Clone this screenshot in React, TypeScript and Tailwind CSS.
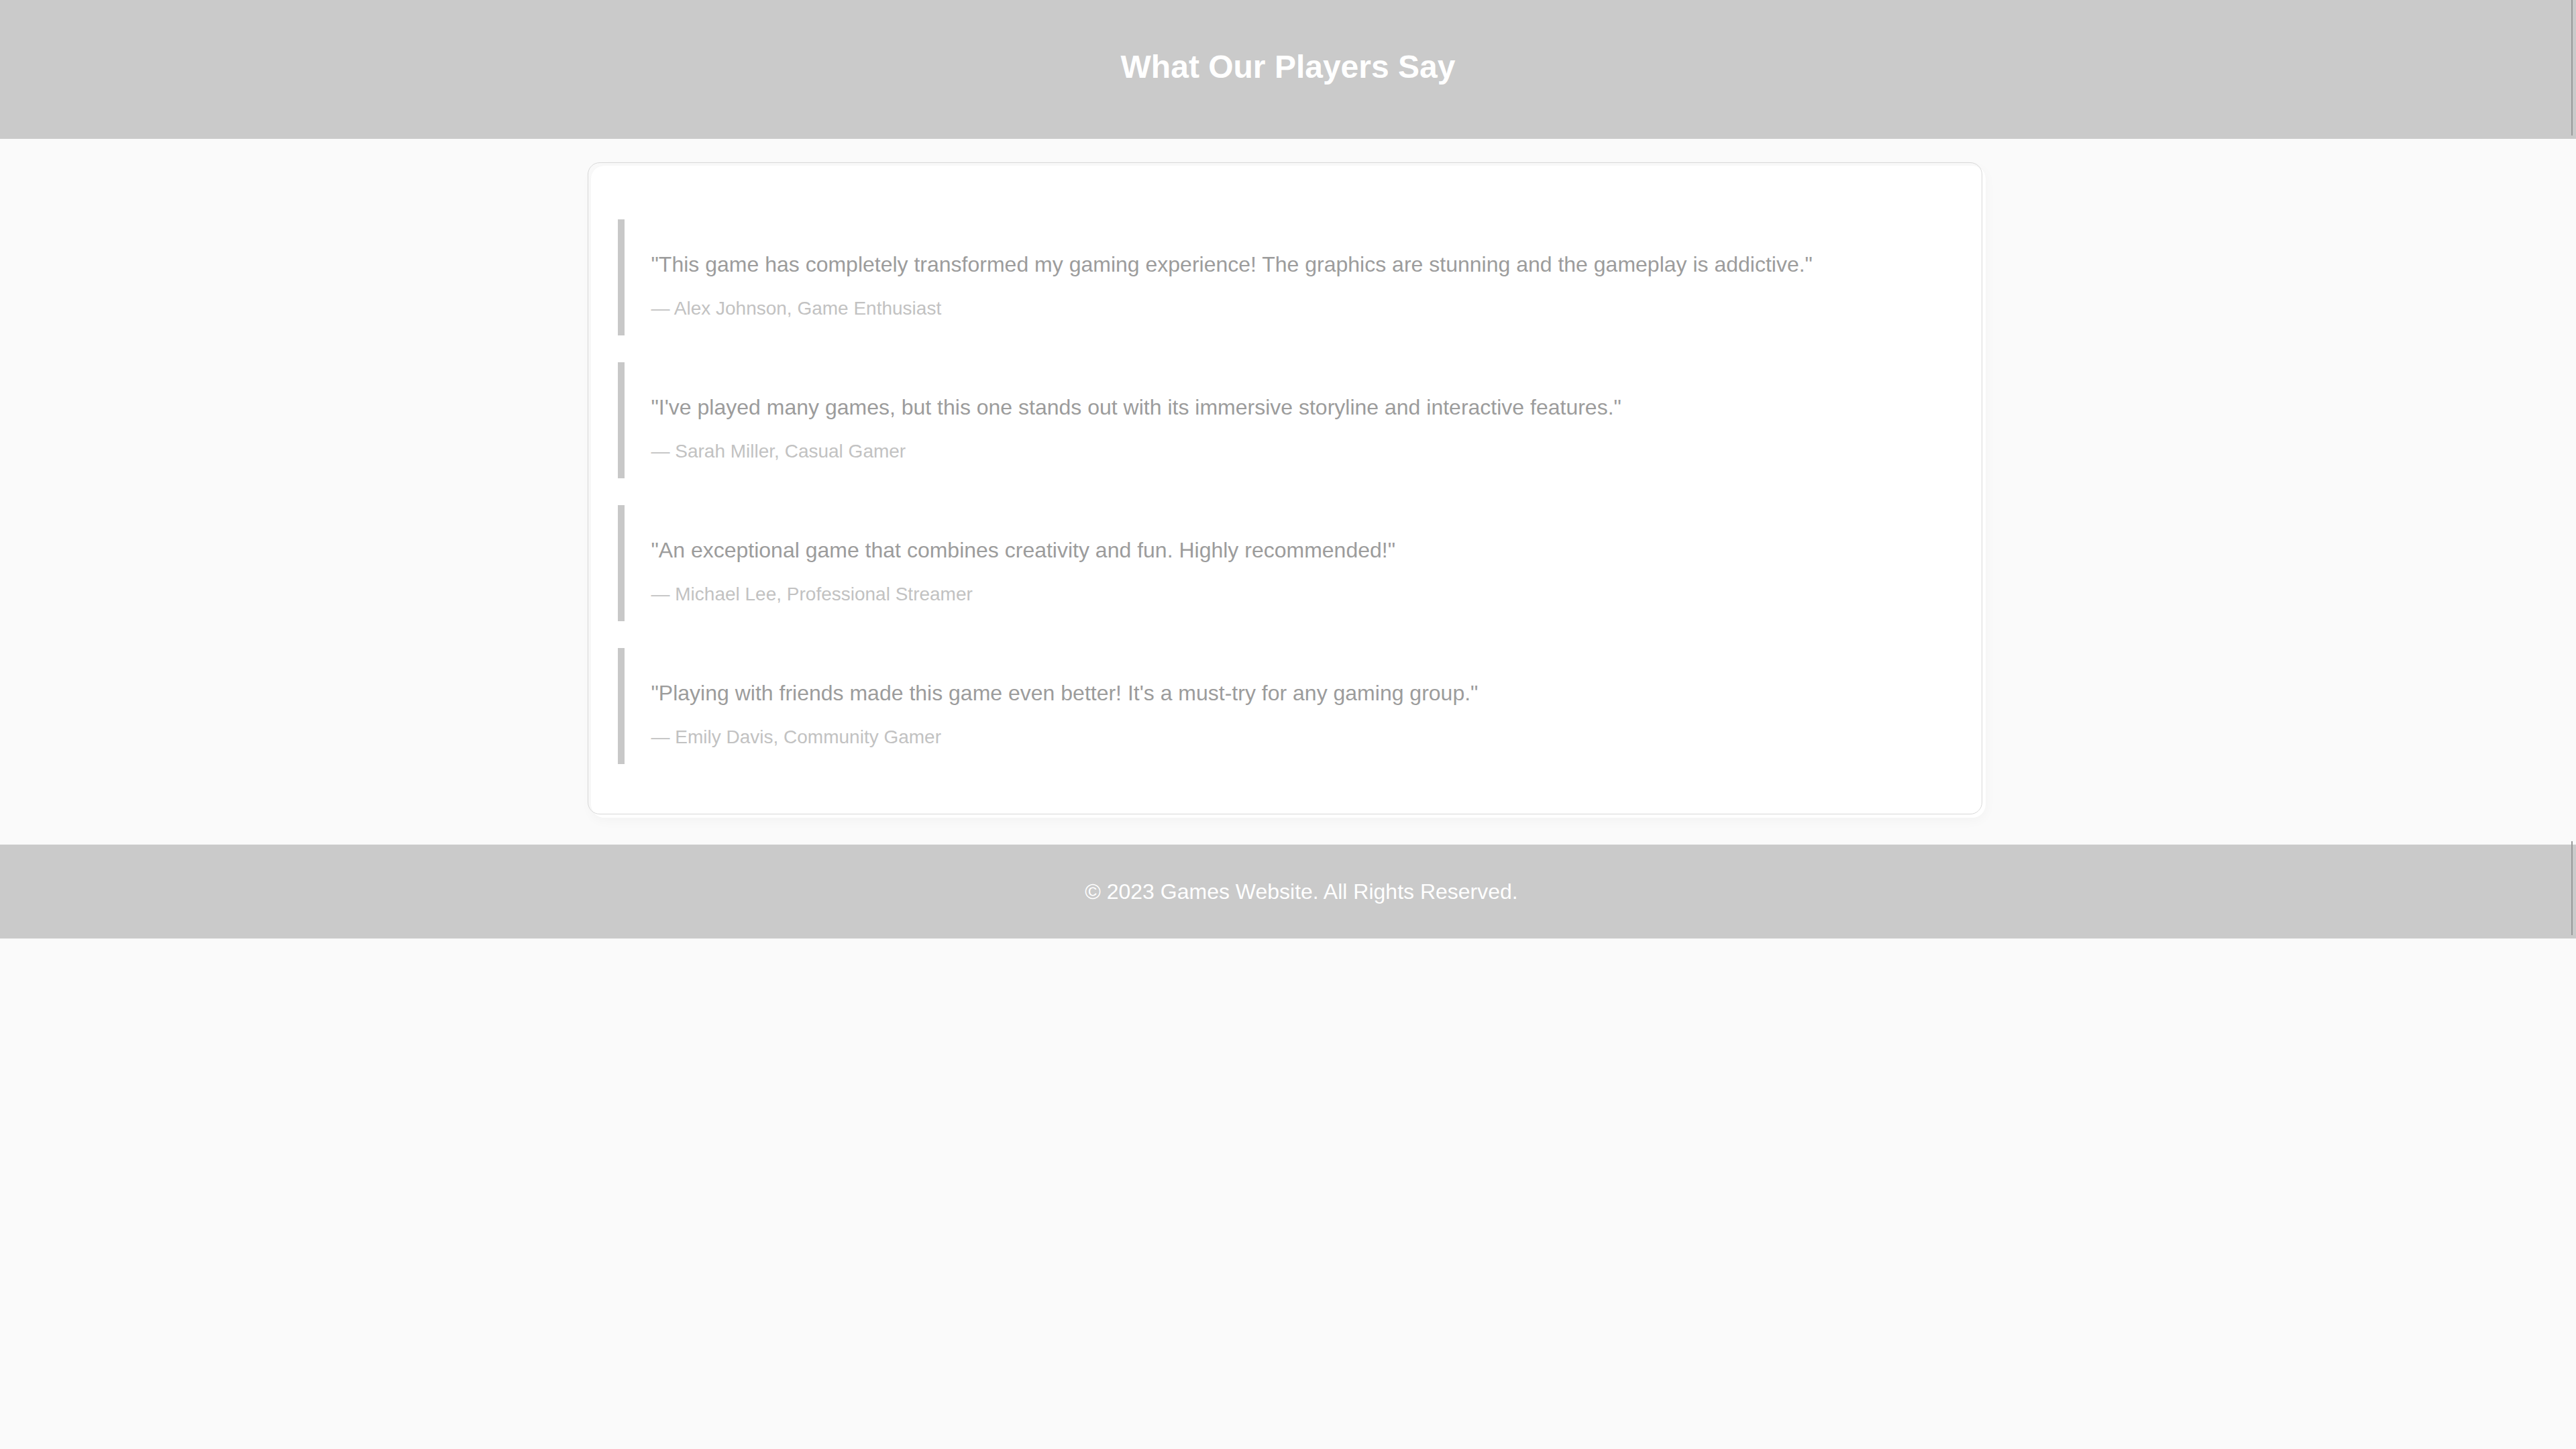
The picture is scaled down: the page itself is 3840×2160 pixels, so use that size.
import React from "react";

type Testimonial = {
    quote: string;
    author: string;
};

const testimonials: Testimonial[] = [
    {
        quote: "\"This game has completely transformed my gaming experience! The graphics are stunning and the gameplay is addictive.\"",
        author: "— Alex Johnson, Game Enthusiast",
    },
    {
        quote: "\"I've played many games, but this one stands out with its immersive storyline and interactive features.\"",
        author: "— Sarah Miller, Casual Gamer",
    },
    {
        quote: "\"An exceptional game that combines creativity and fun. Highly recommended!\"",
        author: "— Michael Lee, Professional Streamer",
    },
    {
        quote: "\"Playing with friends made this game even better! It's a must-try for any gaming group.\"",
        author: "— Emily Davis, Community Gamer",
    },
];

const TestimonialItem: React.FC<Testimonial> = ({ quote, author }) => {
    return (
        <blockquote className="border-l-[10px] border-[#c8c8c8] pl-[40px] pt-[49px] pb-[24px]">
            <p className="text-[32px] leading-[1.15] text-[#9c9c9c]">{quote}</p>
            <p className="mt-[31px] text-[28px] leading-[1.15] text-[#c2c2c2]">{author}</p>
        </blockquote>
    );
};

export default function App() {
    return (
        <div className="min-h-screen bg-[#fafafa] font-['Liberation_Sans',Arial,sans-serif]">
            <header className="relative bg-[#cacaca] pt-[72px] pb-[80px] text-center">
                <h1 className="text-[48px] font-bold leading-[1.15] text-white">
                    What Our Players Say
                </h1>
                <span className="absolute right-[5px] top-0 h-[202px] w-[2px] bg-[#9a9a9a]" />
            </header>

            <main className="py-[40px]">
                <div className="relative mx-auto w-[2079px] rounded-[20px] bg-white p-[40px] shadow-[0_4px_18px_rgba(0,0,0,0.035)] after:pointer-events-none after:absolute after:-left-[5px] after:-top-[5px] after:right-[5px] after:bottom-[5px] after:rounded-[18px] after:border after:border-[#d8d8d8] after:content-['']">
                    <div className="flex flex-col gap-[40px] py-[40px]">
                        {testimonials.map((t, index) => (
                            <TestimonialItem
                                key={`testimonial-${index}`}
                                quote={t.quote}
                                author={t.author}
                            />
                        ))}
                    </div>
                </div>
            </main>

            <footer className="relative flex h-[140px] items-center justify-center bg-[#cacaca] pl-[40px]">
                <p className="text-[32px] leading-[1.15] text-white">
                    © 2023 Games Website. All Rights Reserved.
                </p>
                <span className="absolute right-[5px] -top-[5px] bottom-[5px] w-[2px] bg-[#9a9a9a]" />
            </footer>
        </div>
    );
}
